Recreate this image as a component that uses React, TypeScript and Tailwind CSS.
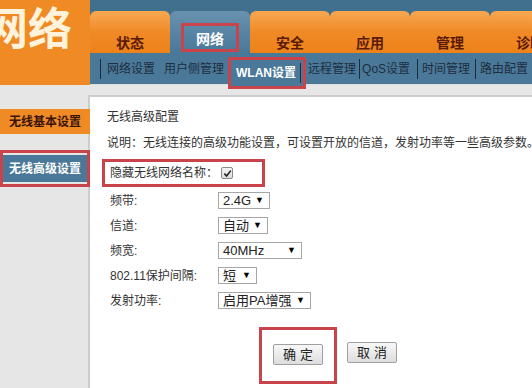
import React from 'react'

const tabs = ['状态', '网络', '安全', '应用', '管理', '诊断']

function Sep() {
    return <span className="w-px h-[20px] bg-[#1c2c3d] shrink-0" />
}

function Select({ value, width }: { value: string; width: string }) {
    return (
        <div className={`${width} h-[17px] border border-[#a6a6a6] bg-white flex items-center justify-between pl-[4px] pr-[5px] text-[13px] leading-none text-[#222]`}>
            <span>{value}</span>
            <span className="text-[9px] text-black">▼</span>
        </div>
    )
}

function Row({ label, children }: { label: string; children: React.ReactNode }) {
    return (
        <div className="h-[25px] flex items-center pl-[3px]">
            <span className="w-[108px] text-[12px] text-[#333]">{label}</span>
            {children}
        </div>
    )
}

export default function App() {
    return (
        <div className="w-[532px] h-[388px] overflow-hidden bg-[#e6e6e6] font-['Liberation_Sans','Noto_Sans_CJK_SC',sans-serif]">
            {/* header */}
            <div className="flex h-[85px]">
                <div className="w-[90px] shrink-0 bg-[#f08a24] overflow-hidden flex items-start pt-[8px]">
                    <span className="ml-[-16px] text-[44px] leading-[44px] font-bold text-[#fff3dc] whitespace-nowrap">网络</span>
                </div>
                <div className="flex-1 flex flex-col min-w-0">
                    <div className="h-[11px] bg-[#41708f]" />
                    <div className="h-[42px] bg-[#41708f] flex overflow-hidden">
                        {tabs.map((t, i) => (
                            <div
                                key={t}
                                className={
                                    i === 1
                                        ? 'w-[80px] shrink-0 rounded-t-[6px] bg-gradient-to-b from-[#6892af] to-[#48789a] flex justify-center pt-[12px]'
                                        : 'w-[80px] shrink-0 rounded-t-[6px] bg-gradient-to-b from-[#f7a850] via-[#f08a26] to-[#ed8218] flex justify-center pt-[22px]'
                                }
                            >
                                {i === 1 ? (
                                    <div className="w-[58px] h-[29px] border-[3px] border-[#c9444a] flex items-center justify-center pt-[4px] text-[14px] font-bold text-white">
                                        {t}
                                    </div>
                                ) : (
                                    <span className="text-[14px] leading-[20px] font-bold text-[#5a1a08] whitespace-nowrap">{t}</span>
                                )}
                            </div>
                        ))}
                    </div>
                    <div className="h-[32px] bg-[#4a7898] flex items-center pl-[10px] text-[12px] text-[#1e2e40] whitespace-nowrap border-b border-[#d9dde0]">
                        <Sep />
                        <span className="ml-[6px]">网络设置</span>
                        <span className="ml-[6px]"><Sep /></span>
                        <span className="ml-[3px]">用户侧管理</span>
                        <div className="relative z-10 self-start mt-[4px] ml-[4px] w-[78px] h-[32px] shrink-0 border-[3px] border-[#c9444a] bg-[#4a7898] flex items-center pl-[5px]">
                            <span className="font-bold text-white">WLAN设置</span>
                            <span className="ml-auto mr-[2px] flex"><Sep /></span>
                        </div>
                        <span className="ml-[2px]">远程管理</span>
                        <span className="ml-[3px] flex"><Sep /></span>
                        <span className="ml-[2px]">QoS设置</span>
                        <span className="ml-[7px] flex"><Sep /></span>
                        <span className="ml-[4px]">时间管理</span>
                        <span className="ml-[5px] flex"><Sep /></span>
                        <span className="ml-[4px]">路由配置</span>
                    </div>
                </div>
            </div>

            {/* body */}
            <div className="flex h-[303px]">
                <div className="w-[88px] shrink-0 flex flex-col">
                    <div className="mt-[24px] w-[90px] h-[25px] relative z-10 bg-[#f08a24] flex items-center justify-center text-[12px] font-bold text-[#3a1406]">
                        无线基本设置
                    </div>
                    <div className="mt-[16px] w-[90px] h-[37px] relative z-10 border-[3px] border-[#c9444a] bg-[#e6e6e6] flex flex-col justify-center">
                        <div className="h-[27px] bg-[#4a7898] flex items-center justify-center text-[12px] font-bold text-white">
                            无线高级设置
                        </div>
                    </div>
                </div>
                <div className="flex-1 mt-[10px] bg-white border-l-2 border-t-2 border-[#cdcdcd] pl-[17px] text-[#333]">
                    <div className="mt-[12px] text-[12px] leading-[16px]">无线高级配置</div>
                    <div className="mt-[10px] text-[12px] leading-[16px] whitespace-nowrap">
                        说明：无线连接的高级功能设置，可设置开放的信道，发射功率等一些高级参数。
                    </div>
                    <div className="mt-[8px] ml-[-5px] w-[163px] h-[28px] border-[3px] border-[#c9444a] flex items-center pl-[5px]">
                        <span className="text-[12px] text-[#333]">隐藏无线网络名称：</span>
                        <span className="ml-[3px] w-[12px] h-[12px] border border-[#8a8a8a] rounded-[2px] bg-gradient-to-b from-[#f4f4f4] to-[#dcdcdc] flex items-center justify-center">
                            <svg width="9" height="9" viewBox="0 0 10 10">
                                <path d="M1.5 5.2 L4 7.8 L8.6 1.8" fill="none" stroke="#222" strokeWidth="1.8" />
                            </svg>
                        </span>
                    </div>
                    <div className="mt-[1px]">
                        <Row label="频带:"><Select value="2.4G" width="w-[52px]" /></Row>
                        <Row label="信道:"><Select value="自动" width="w-[50px]" /></Row>
                        <Row label="频宽:"><Select value="40MHz" width="w-[84px]" /></Row>
                        <Row label="802.11保护间隔:"><Select value="短" width="w-[39px]" /></Row>
                        <Row label="发射功率:"><Select value="启用PA增强" width="w-[93px]" /></Row>
                    </div>
                    <div className="mt-[14px] flex items-start">
                        <div className="ml-[152px] w-[78px] h-[57px] border-[3px] border-[#c9444a] pt-[12px] pl-[11px]">
                            <button className="w-[50px] h-[21px] border border-[#9f9f9f] rounded-[2px] bg-gradient-to-b from-[#f8f8f8] to-[#dddddd] text-[13px] tracking-[4px] pl-[4px] text-[#222]">
                                确定
                            </button>
                        </div>
                        <button className="ml-[10px] mt-[15px] w-[50px] h-[21px] border border-[#9f9f9f] rounded-[2px] bg-gradient-to-b from-[#f8f8f8] to-[#dddddd] text-[13px] tracking-[4px] pl-[4px] text-[#222]">
                            取消
                        </button>
                    </div>
                </div>
            </div>
        </div>
    )
}
